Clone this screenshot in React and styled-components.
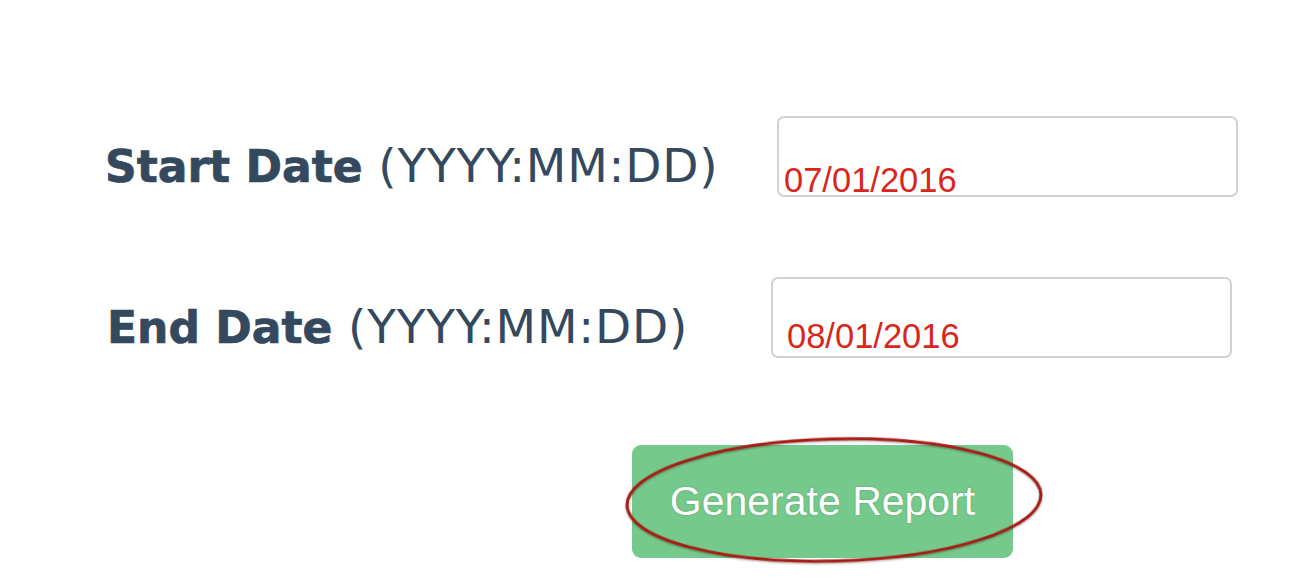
import React from 'react';
import styled, { createGlobalStyle } from 'styled-components';

const GlobalStyle = createGlobalStyle`
	html, body {
		margin: 0;
		padding: 0;
		background: #ffffff;
	}
`;

const Page = styled.div`
	width: 1309px;
	height: 588px;
	box-sizing: border-box;
	padding: 116px 0 0 105px;
	display: flex;
	flex-direction: column;
	gap: 80px;
	overflow: hidden;
`;

const Row = styled.div`
	display: grid;
	grid-template-columns: ${p => p.$labelCol}px 461px;
	align-items: end;
	height: 81px;
	padding-left: ${p => p.$indent || 0}px;
`;

const Label = styled.label`
	font-family: 'DejaVu Sans', Verdana, sans-serif;
	color: #34495e;
	font-size: 44px;
	line-height: 44px;
	padding-bottom: 8px;
	white-space: nowrap;

	b {
		font-weight: 700;
		-webkit-text-stroke: 0.7px #34495e;
	}

	span {
		font-size: 47px;
		letter-spacing: 0.8px;
	}
`;

// text sits low in the box, as in the screenshot
const DateInput = styled.input`
	box-sizing: border-box;
	width: 461px;
	height: 81px;
	margin: 0;
	border: 2px solid #d2d2d2;
	border-radius: 7px;
	padding: ${p => p.$top}px 0 ${p => Math.max(0, 48 - p.$top)}px ${p => p.$left}px;
	font-family: 'Liberation Sans', Arial, sans-serif;
	font-size: 34.5px;
	line-height: 29px;
	color: #d9261c;
	background: #ffffff;
	outline: none;
`;

const ButtonWrap = styled.div`
	position: relative;
	align-self: flex-start;
	margin-left: 527px;
	margin-top: 7px;
`;

const ReportButton = styled.button`
	width: 381px;
	height: 113px;
	border: none;
	border-radius: 9px;
	background: #76c98c;
	color: #ffffff;
	font-family: 'Liberation Sans', Arial, sans-serif;
	font-size: 41px;
	text-shadow: 0 0 2px rgba(40, 90, 50, 0.4);
	cursor: pointer;
`;

const Circle = styled.svg`
	position: absolute;
	left: -9px;
	top: -10px;
	width: 422px;
	height: 130px;
	pointer-events: none;
	overflow: visible;
`;

const rows = [
	{ name: 'Start Date', value: '07/01/2016', labelCol: 672, indent: 0, top: 48, left: 5 },
	{ name: 'End Date', value: '08/01/2016', labelCol: 664, indent: 2, top: 43, left: 14 }
];

const App = () => (
	<>
		<GlobalStyle />
		<Page>
			{rows.map(r => (
				<Row key={r.name} $labelCol={r.labelCol} $indent={r.indent}>
					<Label>
						<b>{r.name}</b>
						<span> (YYYY:MM:DD)</span>
					</Label>
					<DateInput readOnly value={r.value} $top={r.top} $left={r.left} />
				</Row>
			))}
			<ButtonWrap>
				<ReportButton>Generate Report</ReportButton>
				<Circle viewBox="0 0 422 130">
					<ellipse
						cx="211"
						cy="65"
						rx="207"
						ry="61"
						transform="rotate(-1.5 211 65)"
						fill="none"
						stroke="#a81d14"
						strokeWidth="3"
						style={{ filter: 'drop-shadow(0 1px 1px rgba(0,0,0,0.35))' }}
					/>
				</Circle>
			</ButtonWrap>
		</Page>
	</>
);

export default App;
